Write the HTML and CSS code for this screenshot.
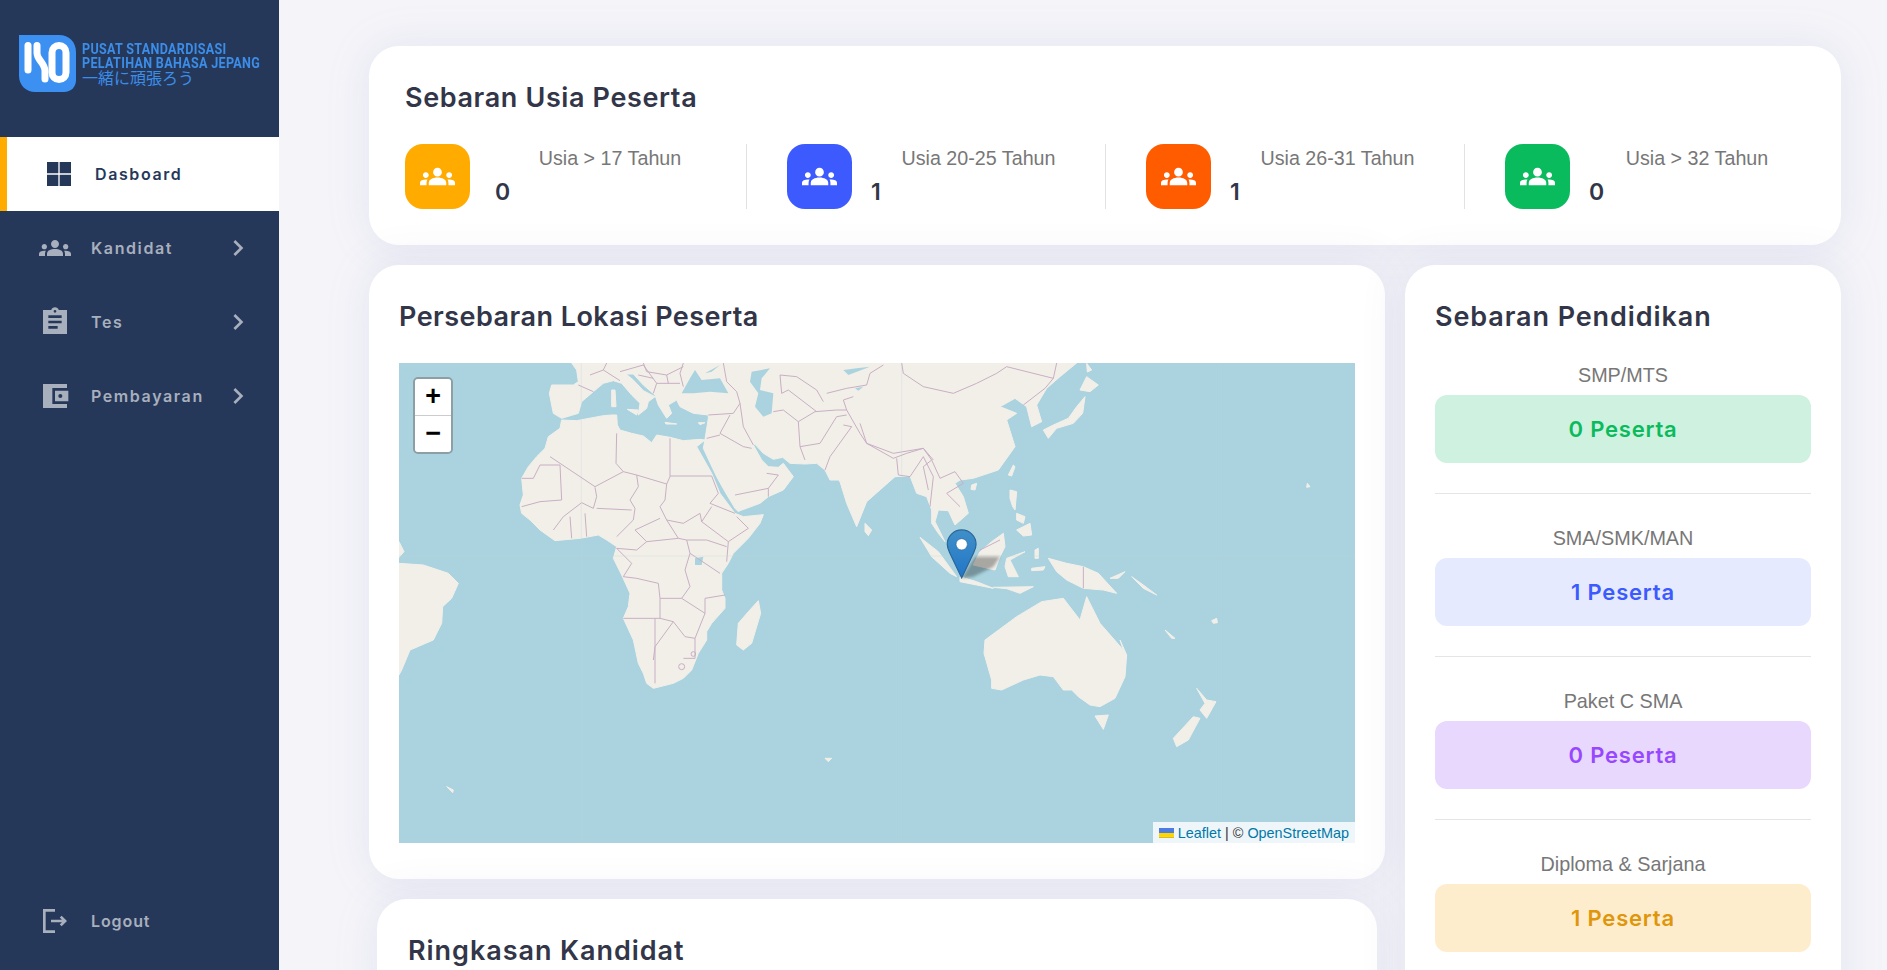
FILE: index.html
```html
<!DOCTYPE html>
<html>
<head>
  <meta charset="utf-8">
  <meta name="viewport" content="width=device-width">
  <link rel="stylesheet" href="styles.css">
  <title>Dasboard</title>
</head>
<body>
  <div class="app">
    <aside class="sidebar">
      <div class="brand">
        <svg class="brand-mark" viewBox="0 0 57 57">
          <path class="brand-bg" d="M0 0H40C50 0 57 7 57 17V45C57 52 52 57 45 57H16C7 57 0 50 0 41Z"/>
          <path class="brand-line" d="M9 10.500V35"/>
          <path class="brand-line" d="M18 10.500V18C18 25 26 28 26 36V44"/>
          <rect class="brand-line" x="33" y="10.500" width="14" height="34" rx="7"/>
        </svg>
        <div class="brand-text">
          <span class="brand-line-text">PUSAT STANDARDISASI</span>
          <span class="brand-line-text">PELATIHAN BAHASA JEPANG</span>
          <span class="brand-jp">一緒に頑張ろう</span>
        </div>
      </div>
      <nav class="nav">
        <a class="nav-item active">
          <svg class="nav-icon" viewBox="0 0 24 24"><path d="M3 3h8.500v8.500H3zM12.500 3H21v8.500h-8.500zM3 12.500h8.500V21H3zM12.500 12.500H21V21h-8.500z"/></svg>
          <span class="nav-text">Dasboard</span>
        </a>
        <a class="nav-item">
          <svg class="nav-icon" viewBox="0 0 24 24"><path d="M12 12.750c1.630 0 3.070.390 4.240.900 1.080.480 1.760 1.560 1.760 2.730V18H6v-1.610c0-1.180.680-2.260 1.760-2.730 1.170-.520 2.610-.910 4.240-.910zM4 13c1.100 0 2-.900 2-2s-.900-2-2-2-2 .900-2 2 .900 2 2 2zm1.130 1.100c-.370-.060-.740-.100-1.130-.100-.990 0-1.930.210-2.780.580C.480 14.900 0 15.620 0 16.430V18h4.500v-1.610c0-.830.230-1.610.630-2.290zM20 13c1.100 0 2-.900 2-2s-.900-2-2-2-2 .900-2 2 .900 2 2 2zm4 3.430c0-.810-.480-1.530-1.220-1.850-.850-.370-1.790-.580-2.780-.580-.390 0-.760.040-1.130.100.400.680.630 1.460.630 2.290V18H24v-1.570zM12 6c1.660 0 3 1.340 3 3s-1.340 3-3 3-3-1.340-3-3 1.340-3 3-3z"/></svg>
          <span class="nav-text">Kandidat</span>
          <svg class="nav-arrow" viewBox="0 0 24 24"><path d="M10 6L8.590 7.410 13.170 12l-4.580 4.590L10 18l6-6z"/></svg>
        </a>
        <a class="nav-item">
          <svg class="nav-icon" viewBox="0 0 24 24"><path d="M21 3h-6.180C14.400 1.840 13.300 1 12 1s-2.400.840-2.820 2H3v18h18V3zm-9 0c.550 0 1 .450 1 1s-.450 1-1 1-1-.450-1-1 .450-1 1-1zm2 14H7v-2h7v2zm3-4H7v-2h10v2zm0-4H7V7h10v2z"/></svg>
          <span class="nav-text">Tes</span>
          <svg class="nav-arrow" viewBox="0 0 24 24"><path d="M10 6L8.590 7.410 13.170 12l-4.580 4.590L10 18l6-6z"/></svg>
        </a>
        <a class="nav-item">
          <svg class="nav-icon" viewBox="0 0 24 24"><path d="M21 18v3H3V3h18v3H10v12h11zm-9-2h10V8H12v8zm4-2.500c-.830 0-1.500-.670-1.500-1.500s.670-1.500 1.500-1.500 1.500.670 1.500 1.500-.670 1.500-1.500 1.500z"/></svg>
          <span class="nav-text">Pembayaran</span>
          <svg class="nav-arrow" viewBox="0 0 24 24"><path d="M10 6L8.590 7.410 13.170 12l-4.580 4.590L10 18l6-6z"/></svg>
        </a>
      </nav>
      <a class="nav-item logout">
        <svg class="nav-icon" viewBox="0 0 24 24"><path d="M17 8l-1.410 1.410L17.170 11H9v2h8.170l-1.580 1.580L17 16l4-4-4-4zM5 5h7V3H3v18h9v-2H5V5z"/></svg>
        <span class="nav-text">Logout</span>
      </a>
    </aside>

    <main class="content">
      <section class="card card-usia">
        <h2 class="title title-usia">Sebaran Usia Peserta</h2>
        <div class="stats">
          <div class="stat stat-first">
            <div class="stat-icon orange"><svg viewBox="0 0 24 24"><use href="#groups"/></svg></div>
            <div class="stat-body">
              <p class="stat-label">Usia &gt; 17 Tahun</p>
              <p class="stat-num">0</p>
            </div>
          </div>
          <div class="stat">
            <div class="stat-icon blue"><svg viewBox="0 0 24 24"><use href="#groups"/></svg></div>
            <div class="stat-body">
              <p class="stat-label">Usia 20-25 Tahun</p>
              <p class="stat-num">1</p>
            </div>
          </div>
          <div class="stat">
            <div class="stat-icon red"><svg viewBox="0 0 24 24"><use href="#groups"/></svg></div>
            <div class="stat-body">
              <p class="stat-label">Usia 26-31 Tahun</p>
              <p class="stat-num">1</p>
            </div>
          </div>
          <div class="stat">
            <div class="stat-icon green"><svg viewBox="0 0 24 24"><use href="#groups"/></svg></div>
            <div class="stat-body">
              <p class="stat-label">Usia &gt; 32 Tahun</p>
              <p class="stat-num">0</p>
            </div>
          </div>
        </div>
      </section>

      <div class="row">
        <div class="col-left">
          <section class="card card-map">
            <h2 class="title title-lokasi">Persebaran Lokasi Peserta</h2>
            <div class="map">
              <svg class="map-svg" viewBox="27 39 2868 1440">
                <g class="land">
                  <!-- amerika selatan -->
                  <path d="M27 640L100 645 175 670 205 700 185 745 158 770 155 820 130 870 60 900 35 960 27 975Z"/>
                  <path d="M27 575L42 605 27 622Z"/>
                  <!-- afrika -->
                  <path d="M515 210L560 212 640 197 665 195 680 195 682 225 690 240 725 250 760 258 785 278 800 255 840 262 880 272 930 268 945 270 920 290 965 370 990 430 1035 490 1060 500 1120 494 1110 520 1075 565 1030 610 1015 640 995 670 995 720 1005 745 1005 775 965 820 950 845 950 870 925 910 905 960 880 985 850 1000 790 1015 770 1000 760 970 745 940 730 870 700 805 715 770 720 730 695 675 670 625 680 590 650 570 625 555 570 565 495 572 450 540 420 510 395 490 390 465 400 435 395 385 415 350 440 320 465 295 475 260 510 235Z"/>
                  <path d="M1105 752L1112 790 1085 880 1060 900 1040 885 1045 820 1075 785Z"/>
                  <!-- eurasia -->
                  <path d="M545 39L560 60 565 95 550 105 485 105 478 130 490 190 515 205 565 190 575 155 610 125 640 100 670 92 695 100 725 135 750 160 745 195 770 175 775 155 795 140 760 122 730 90 708 72 730 72 760 105 795 135 805 165 830 205 845 190 835 165 860 150 870 170 910 190 955 195 955 205 945 268 940 295 980 380 1005 425 1035 475 1045 485 1050 482 1110 460 1135 440 1180 420 1210 380 1180 340 1165 352 1135 350 1115 330 1090 285 1095 283 1120 310 1150 328 1178 322 1200 340 1245 342 1280 340 1305 360 1320 390 1345 390 1350 395 1370 460 1400 530 1430 455 1515 380 1560 378 1580 430 1610 440 1625 480 1625 520 1645 550 1665 575 1660 565 1635 515 1645 480 1675 482 1695 525 1735 490 1720 440 1695 400 1710 390 1750 385 1825 360 1875 290 1850 210 1880 190 1830 170 1875 145 1910 170 1925 230 1955 215 1940 165 1970 115 2010 80 2060 39Z"/>
                  <!-- jepang, taiwan, filipina -->
                  <path d="M2070 120L2090 80 2125 105 2100 125Z"/>
                  <path d="M1960 240L1975 265 2000 235 2050 220 2078 190 2085 140 2060 170 2035 205 1990 225Z"/>
                  <path d="M2090 40L2105 60 2092 66Z"/>
                  <path d="M1855 375L1870 345 1875 350 1865 378Z"/>
                  <path d="M1860 420L1880 425 1875 480 1868 470 1860 445Z"/>
                  <path d="M1880 540L1920 520 1925 555 1900 558Z"/>
                  <path d="M1880 490L1905 500 1900 520 1880 510Z"/>
                  <path d="M1745 405L1760 400 1755 420 1743 418Z"/>
                  <path d="M1425 520L1445 540 1435 557 1425 545Z"/>
                  <!-- indonesia -->
                  <path d="M1590 562L1645 605 1700 680 1680 670 1625 620Z"/>
                  <path d="M1710 680L1760 695 1810 715 1760 705 1710 695Z"/>
                  <path d="M1810 712L1930 710 1890 730 1850 716Z"/>
                  <path d="M1770 605L1805 575 1840 550 1845 590 1830 620 1815 660 1750 645Z"/>
                  <path d="M1850 625L1905 605 1860 630 1885 680 1855 680 1845 650Z"/>
                  <path d="M1975 625L2030 640 2080 650 2125 670 2180 730 2140 720 2080 715 2030 690 2000 665Z"/>
                  <path d="M1935 600L1945 595 1945 625 1935 625Z"/>
                  <path d="M1925 655L1965 650 1960 660 1925 662Z"/>
                  <path d="M2160 685L2205 665 2185 685Z"/>
                  <path d="M2225 680L2260 705 2300 735 2260 715Z"/>
                  <path d="M2325 840L2355 865 2345 865Z"/>
                  <path d="M2465 812L2480 805 2482 818 2470 820Z"/>
                  <path d="M2752 400L2760 410 2750 412Z"/>
                  <!-- australia, nz -->
                  <path d="M1785 870L1880 800 1955 755 2020 745 2070 810 2090 740 2130 820 2200 900 2190 870 2210 915 2205 980 2175 1045 2130 1070 2100 1065 2065 1040 2045 1020 2020 1020 1990 980 1950 975 1900 990 1835 1020 1805 1015 1805 990 1782 910Z"/>
                  <path d="M2115 1098L2155 1095 2140 1138Z"/>
                  <path d="M2420 1015L2450 1050 2478 1055 2450 1105 2430 1080 2445 1060Z"/>
                  <path d="M2410 1100L2430 1105 2395 1170 2360 1190 2350 1165Z"/>
                  <!-- pulau kecil -->
                  <path d="M665 120L675 120 678 170 665 170Z"/>
                  <path d="M712 178L745 180 740 195Z"/>
                  <path d="M825 217L860 222 828 222Z"/>
                  <path d="M925 218L945 218 930 224Z"/>
                  <path d="M170 1310L190 1320 188 1328Z"/>
                  <path d="M1305 1225L1325 1225 1315 1235Z"/>
                </g>
                <g class="water">
                  <path d="M875 130L900 85 915 60 935 90 990 85 1015 130 960 125 910 130Z"/>
                  <path d="M945 70L990 45 965 65Z"/>
                  <path d="M1085 65L1140 55 1115 85 1110 120 1150 130 1145 190 1120 200 1095 170 1105 130 1080 95Z"/>
                  <path d="M915 625L940 620 935 645 915 645Z"/>
                  <path d="M1360 60L1400 55 1440 50 1375 75Z"/>
                  <path d="M1395 115L1420 110 1405 122Z"/>
                </g>
                <g class="borders">
                  <path d="M1050 160L1060 230 1090 285M955 195L1030 190 1050 160M1020 195L990 250 1060 290 1085 295M950 265L990 255M1035 435L1135 415 1165 375M1135 415V440M1165 375L1130 370"/>
                  <path d="M1225 215L1230 290 1245 330M1150 185L1180 180 1225 215M1230 290L1290 280 1340 200 1370 195M1225 215L1275 185 1340 180 1370 180M1170 75L1175 130 1195 120 1280 185M1170 75L1220 80 1280 120 1300 155M1310 130L1370 115 1430 105 1440 70 1480 45M1370 180L1360 150 1390 140"/>
                  <path d="M1360 225L1385 230 1320 320 1305 360M1370 180L1410 250 1430 280 1510 325 1550 310 1600 295 1630 330M1520 325L1525 375 1560 380M1560 380L1600 320 1630 380 1620 470"/>
                  <path d="M1535 39L1540 70 1600 110 1690 130 1760 100 1820 70 1850 50 1990 85 2000 39M1990 85L1965 115 1900 165M1410 220L1430 280 1510 310 1600 295 1625 330 1650 385 1695 365 1720 400 1670 430 1710 470"/>
                  <path d="M1770 600L1830 570M2080 650V715M1625 330L1600 350 1615 420"/>
                  <path d="M480 320L615 410 700 365 740 375 830 402 840 380V265M840 378H965M680 250L678 340 700 365M510 345L515 450 450 455 395 470M510 345H450L430 385H395M615 412L620 440 610 475 575 458 520 500 490 540"/>
                  <path d="M740 375L745 410 720 450 735 475 730 510 680 560M620 475L725 480M540 500L545 565M585 490L590 560M830 402L825 450 810 470 830 510 865 565 770 575 735 540 810 505"/>
                  <path d="M830 510L880 520 930 490 935 515 1015 575 1075 535 1040 500M965 378L985 430 960 460 1035 490M935 515L965 470M1015 575L1010 635M865 565L890 570 950 570 1010 590"/>
                  <path d="M770 575L740 600 680 595 725 640 700 680 740 685 805 700 810 745 875 745 900 710 885 660 900 610 890 570M900 610L990 670M945 745L1005 735M810 745V805H700M810 805L850 815 885 860 915 865 945 790 945 745M795 805V1000M850 815L795 890 790 930M915 865V925L880 925M875 745L945 790"/>
                  <path d="M565 105L610 125M640 60L690 92M690 65L760 45M760 45L800 100 790 130M800 100H870M880 39L870 70 880 110M760 39L770 65 830 75 880 50M1000 39L1010 95 1040 125 1050 160M650 39L640 60 600 75M745 75L790 85M830 75L835 100"/>
                  <circle cx="875" cy="950" r="9"/>
                  <circle cx="910" cy="912" r="7"/>
                </g>
                <g class="seams">
                  <path d="M574 39V1479M1535 39V1479M2495 39V1479M27 618H2895"/>
                </g>
                <polygon class="marker-shadow" points="1715,685 1755,620 1830,620 1810,650 1750,680"/>
                <defs>
                  <linearGradient id="pin" x1="0" y1="0" x2="0" y2="1">
                    <stop offset="0" stop-color="#3f8fc8"/>
                    <stop offset="1" stop-color="#2176c7"/>
                  </linearGradient>
                </defs>
                <g transform="translate(1670 538) scale(3.600)">
                  <path class="pin" d="M12.500.500C5.900.500.500 5.900.500 12.500C.500 15 1.500 17.500 2.500 19.500L12.500 40.500L22.500 19.500C23.500 17.500 24.500 15 24.500 12.500C24.500 5.900 19.100.500 12.500.500Z"/>
                  <circle class="pin-dot" cx="12.500" cy="12.500" r="4.700"/>
                </g>
              </svg>
              <div class="zoom">
                <button type="button" class="zoom-btn">+</button>
                <button type="button" class="zoom-btn">−</button>
              </div>
              <div class="attribution">
                <svg class="flag" viewBox="0 0 12 8"><path fill="#4c7be1" d="M0 0h12v4H0z"/><path fill="#ffd500" d="M0 4h12v3H0z"/><path fill="#e0bc00" d="M0 7h12v1H0z"/></svg>
                <a>Leaflet</a> | © <a>OpenStreetMap</a>
              </div>
            </div>
          </section>
          <section class="card card-ringkasan">
            <h2 class="title title-ringkasan">Ringkasan Kandidat</h2>
          </section>
        </div>

        <section class="card card-edu">
          <h2 class="title title-edu">Sebaran Pendidikan</h2>
          <div class="edu">
            <p class="edu-label">SMP/MTS</p>
            <div class="edu-box box-green">0 Peserta</div>
          </div>
          <div class="edu">
            <p class="edu-label">SMA/SMK/MAN</p>
            <div class="edu-box box-blue">1 Peserta</div>
          </div>
          <div class="edu">
            <p class="edu-label">Paket C SMA</p>
            <div class="edu-box box-purple">0 Peserta</div>
          </div>
          <div class="edu">
            <p class="edu-label">Diploma &amp; Sarjana</p>
            <div class="edu-box box-yellow">1 Peserta</div>
          </div>
        </section>
      </div>
    </main>
  </div>

  <svg class="sprite" width="0" height="0">
    <symbol id="groups" viewBox="0 0 24 24">
      <path d="M12 12.750c1.630 0 3.070.390 4.240.900 1.080.480 1.760 1.560 1.760 2.730V18H6v-1.610c0-1.180.680-2.260 1.760-2.730 1.170-.520 2.610-.910 4.240-.910zM4 13c1.100 0 2-.900 2-2s-.900-2-2-2-2 .900-2 2 .900 2 2 2zm1.130 1.100c-.370-.060-.740-.100-1.130-.100-.990 0-1.930.210-2.780.580C.480 14.900 0 15.620 0 16.430V18h4.500v-1.610c0-.830.230-1.610.630-2.290zM20 13c1.100 0 2-.900 2-2s-.900-2-2-2-2 .900-2 2 .900 2 2 2zm4 3.430c0-.810-.480-1.530-1.220-1.850-.850-.370-1.790-.580-2.780-.580-.390 0-.760.040-1.130.100.400.680.630 1.460.630 2.290V18H24v-1.570zM12 6c1.660 0 3 1.340 3 3s-1.340 3-3 3-3-1.340-3-3 1.340-3 3-3z"/>
    </symbol>
  </svg>
</body>
</html>
```

FILE: styles.css
```css
* {
  box-sizing: border-box;
}
body {
  margin: 0;
  background-color: #f5f5f9;
  font-family: "Liberation Sans", sans-serif;
  overflow: hidden;
}
p {
  margin: 0;
}
.sprite {
  position: absolute;
}
.app {
  display: flex;
  height: 100vh;
}

/* sidebar */
.sidebar {
  display: flex;
  flex-direction: column;
  flex: none;
  width: 279px;
  padding-bottom: 12px;
  background-color: #26385a;
}
.brand {
  display: flex;
  gap: 6px;
  height: 137px;
  padding: 35px 0 0 19px;
}
.brand-mark {
  flex: none;
  width: 57px;
  height: 57px;
}
.brand-bg {
  fill: #3b90f2;
}
.brand-line {
  fill: none;
  stroke: #fff;
  stroke-width: 7;
  stroke-linecap: round;
}
.brand-text {
  display: flex;
  flex-direction: column;
  padding-top: 7px;
  color: #3b8de8;
  font-family: "Roboto", sans-serif;
  font-size: 15.500px;
  font-weight: 700;
  line-height: 14.250px;
  letter-spacing: .4px;
  white-space: nowrap;
}
.brand-line-text {
  display: block;
  width: 177px;
  transform: scaleX(.81);
  transform-origin: left center;
}
.brand-jp {
  font-family: "Noto Sans CJK JP", sans-serif;
  font-size: 16px;
  font-weight: 400;
  line-height: 13px;
  letter-spacing: 0;
}
.nav-item {
  display: flex;
  align-items: center;
  gap: 20px;
  height: 74px;
  padding-left: 39px;
  color: #a8afbd;
  font-family: "Inter", sans-serif;
  font-size: 16px;
  font-weight: 600;
  letter-spacing: 1.600px;
}
.nav-icon {
  flex: none;
  width: 32px;
  height: 32px;
  fill: currentColor;
}
.nav-text {
  flex: 1;
}
.nav-arrow {
  flex: none;
  width: 32px;
  height: 32px;
  margin-left: -20px;
  margin-right: 25.500px;
  fill: currentColor;
}
.nav-item.active {
  padding-left: 36px;
  border-left: 7px solid #ffab00;
  background-color: #fff;
  color: #26385a;
}
.logout {
  margin-top: auto;
  letter-spacing: .9px;
}

/* isi */
.content {
  flex: 1;
  min-width: 0;
  padding: 46px 46px 0 90px;
  overflow: hidden;
}
.card {
  border-radius: 30px;
  background-color: #fff;
  box-shadow: 0 0 40px 8px rgba(90, 85, 180, .08);
}
.title {
  margin: 0;
  color: #323648;
  font-family: "Inter", sans-serif;
  font-size: 27px;
  font-weight: 600;
  line-height: 40px;
}
.title-usia { letter-spacing: .62px; }
.title-lokasi { letter-spacing: .46px; }
.title-edu { letter-spacing: .9px; }
.title-ringkasan { letter-spacing: .95px; }
.card-usia {
  height: 199px;
  padding: 32px 36px 0;
}
.stats {
  display: grid;
  grid-template-columns: 341px 359px 359px 360px;
  margin-top: 26px;
}
.stat {
  display: flex;
  height: 65px;
  padding-left: 40px;
  border-left: 1px solid #e2e2e2;
}
.stat-first {
  padding-left: 0;
  border-left: 0;
}
.stat-icon {
  display: flex;
  flex: none;
  align-items: center;
  justify-content: center;
  width: 65px;
  height: 65px;
  border-radius: 18px;
}
.stat-icon svg {
  width: 35px;
  height: 35px;
  fill: #fff;
}
.orange { background-color: #ffab00; }
.blue { background-color: #3d5afe; }
.red { background-color: #ff5c00; }
.green { background-color: #0abb5d; }
.stat-body {
  flex: 1;
}
.stat-first .stat-body {
  padding-left: 4px;
}
.stat-label {
  padding-top: 3px;
  color: #777;
  font-size: 19.700px;
  line-height: 22px;
  text-align: center;
}
.stat-num {
  margin-top: 9px;
  padding-left: 19px;
  color: #323648;
  font-family: "Inter", sans-serif;
  font-size: 23px;
  font-weight: 600;
  line-height: 28px;
}
.stat-first .stat-num {
  padding-left: 21px;
}

.row {
  display: flex;
  gap: 20px;
  margin-top: 20px;
}
.col-left {
  flex: none;
  width: 1016px;
}
.card-map {
  height: 614px;
  padding: 32px 30px 0;
}
.map {
  position: relative;
  height: 480px;
  margin-top: 26px;
  overflow: hidden;
  background-color: #aad3df;
}
.map-svg {
  display: block;
  width: 956px;
  height: 480px;
}
.land {
  fill: #f2efe9;
  stroke: #f2efe9;
  stroke-width: 3;
  stroke-linejoin: round;
  filter: blur(.5px);
}
.water {
  fill: #aad3df;
}
.borders {
  fill: none;
  stroke: #c8afc4;
  stroke-width: 3;
  stroke-linejoin: round;
}
.seams {
  fill: none;
  stroke: #c6d4d8;
  stroke-width: 1.500;
  opacity: .55;
}
.marker-shadow {
  fill: rgba(0, 0, 0, .3);
  filter: blur(4px);
}
.pin {
  fill: url(#pin);
  stroke: #2a6597;
  stroke-width: 1;
}
.pin-dot {
  fill: #fff;
  stroke: #2a6597;
  stroke-width: .5;
}
.zoom {
  position: absolute;
  top: 14px;
  left: 14px;
  display: flex;
  flex-direction: column;
  width: 40px;
  height: 77px;
  overflow: hidden;
  border: 2px solid #8d9ea5;
  border-radius: 5px;
}
.zoom-btn {
  flex: 1;
  padding: 3px 0 0;
  border: 0;
  background-color: #fff;
  color: #000;
  font-family: "Liberation Mono", monospace;
  font-size: 27px;
  font-weight: 700;
  line-height: 33px;
}
.zoom-btn + .zoom-btn {
  border-top: 1px solid #ccc;
}
.attribution {
  position: absolute;
  right: 0;
  bottom: 0;
  display: flex;
  align-items: center;
  gap: 4px;
  height: 21px;
  padding: 0 6px;
  background-color: rgba(255, 255, 255, .8);
  color: #333;
  font-size: 14.400px;
}
.attribution a {
  color: #0078a8;
}
.flag {
  width: 15px;
  height: 10px;
}
.card-ringkasan {
  height: 300px;
  margin: 20px 8px 0;
  padding: 32px 31px;
}
.card-edu {
  flex: 1;
  height: 800px;
  padding: 32px 30px 0;
}
.edu {
  padding: 32px 0 30px;
  border-bottom: 1px solid #e5e5e5;
  text-align: center;
}
.title + .edu {
  padding-top: 26px;
}
.edu-label {
  margin-bottom: 8px;
  color: #777;
  font-size: 19.800px;
  line-height: 24px;
}
.edu-box {
  height: 68px;
  border-radius: 12px;
  font-family: "Inter", sans-serif;
  font-size: 22px;
  font-weight: 600;
  letter-spacing: .8px;
  line-height: 69px;
}
.box-green { background-color: #cff1df; color: #0abb5d; }
.box-blue { background-color: #e5eaff; color: #3d5afe; }
.box-purple { background-color: #e9d8fd; color: #9747ff; }
.box-yellow { background-color: #feedcd; color: #e0960a; }
```
